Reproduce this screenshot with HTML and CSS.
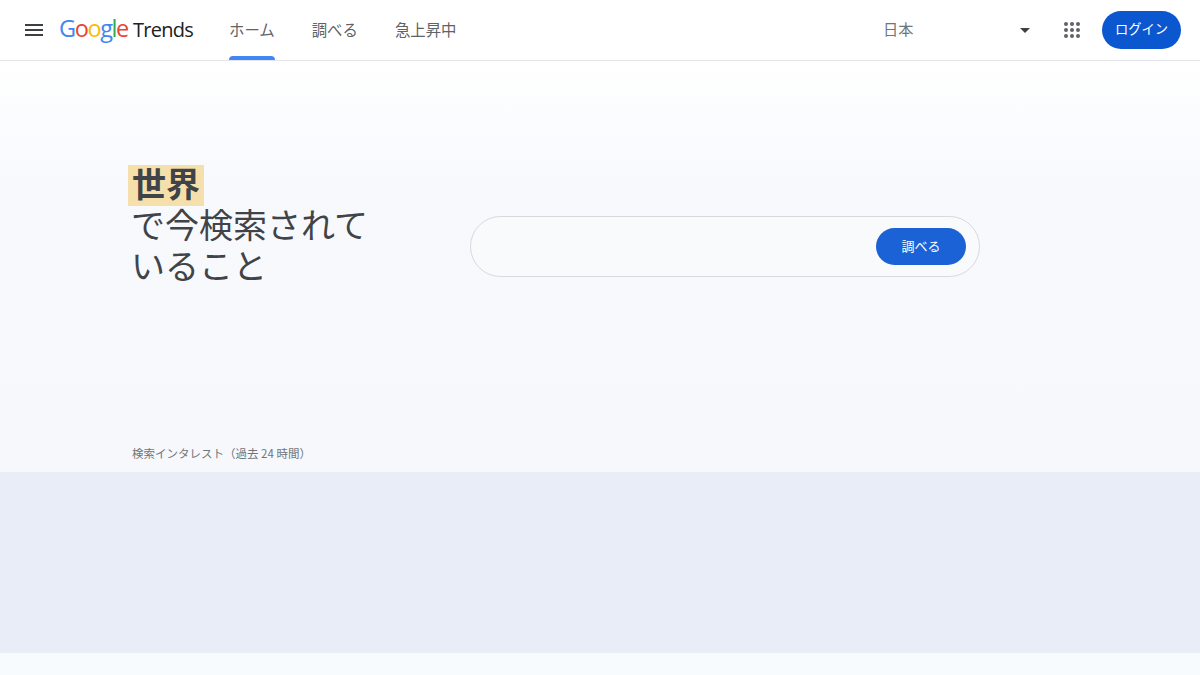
FILE: index.html
```html
<!DOCTYPE html>
<html lang="ja">
<head>
<meta charset="utf-8">
<title>Google Trends</title>
<link rel="stylesheet" href="styles.css">
</head>
<body>
<header class="topbar">
  <button class="icon-btn menu" aria-label="メニュー">
    <svg width="18" height="12" viewBox="0 0 18 12"><path d="M0 0h18v2H0zM0 5h18v2H0zM0 10h18v2H0z" fill="#3c4043"/></svg>
  </button>
  <div class="logo"><span class="g-blue">G</span><span class="g-red">o</span><span class="g-yellow">o</span><span class="g-blue">g</span><span class="g-green">l</span><span class="g-red">e</span><span class="logo-product">Trends</span></div>
  <nav class="tabs">
    <a class="tab active">ホーム</a>
    <a class="tab">調べる</a>
    <a class="tab">急上昇中</a>
  </nav>
  <div class="country">
    <span class="country-name">日本</span>
    <i class="caret"></i>
  </div>
  <button class="icon-btn apps" aria-label="アプリ">
    <svg width="16" height="16" viewBox="0 0 16 16" fill="#5f6368"><circle cx="2" cy="2" r="2"/><circle cx="8" cy="2" r="2"/><circle cx="14" cy="2" r="2"/><circle cx="2" cy="8" r="2"/><circle cx="8" cy="8" r="2"/><circle cx="14" cy="8" r="2"/><circle cx="2" cy="14" r="2"/><circle cx="8" cy="14" r="2"/><circle cx="14" cy="14" r="2"/></svg>
  </button>
  <button class="login">ログイン</button>
</header>
<main>
  <section class="hero">
    <div class="hero-row">
      <h1 class="headline"><b class="mark">世界</b><span class="line">で今検索されて</span><span class="line">いること</span></h1>
      <div class="search">
        <button class="search-btn">調べる</button>
      </div>
    </div>
    <p class="caption">検索インタレスト（過去 24 時間）</p>
  </section>
  <section class="band"></section>
  <section class="foot"></section>
</main>
</body>
</html>
```
FILE: styles.css
```css
* { box-sizing: border-box; }
html, body { margin: 0; height: 100%; }
body {
  width: 1200px;
  height: 675px;
  overflow: hidden;
  background: #f8fbfe;
  font-family: "Noto Sans CJK JP", "Noto Sans", sans-serif;
  color: #3c4043;
}
button { font-family: inherit; border: 0; padding: 0; background: none; }

.topbar {
  display: flex;
  align-items: center;
  height: 61px;
  background: #fff;
  border-bottom: 1px solid #e3e5e8;
}
.icon-btn { display: flex; align-items: center; justify-content: center; }
.menu { margin-left: 25px; width: 18px; height: 12px; }
.logo {
  margin-left: 16px;
  width: 153px;
  padding-bottom: 2px;
  font-family: "Open Sans", sans-serif;
  font-size: 23.5px;
  font-weight: 500;
  letter-spacing: -1.4px;
  line-height: 30px;
  white-space: nowrap;
}
.g-blue { color: #4285f4; }
.g-red { color: #ea4335; }
.g-yellow { color: #fbbc05; }
.g-green { color: #34a853; }
.logo-product {
  margin-left: 5px;
  color: #202124;
  font-size: 20px;
  letter-spacing: -0.7px;
}
.tabs {
  display: flex;
  gap: 37px;
  margin-left: 17px;
  height: 60px;
}
.tab {
  position: relative;
  display: flex;
  align-items: center;
  height: 60px;
  padding-bottom: 3px;
  font-size: 15.4px;
  color: #5f6368;
}
.tab.active::after {
  content: "";
  position: absolute;
  left: 0;
  right: 0;
  bottom: 0;
  height: 4px;
  background: #4285f4;
  border-radius: 4px 4px 0 0;
}
.country {
  display: flex;
  align-items: center;
  justify-content: space-between;
  width: 147px;
  margin-left: auto;
  font-size: 15.2px;
  color: #70757a;
}
.country-name { padding-bottom: 4px; }
.caret {
  width: 0;
  height: 0;
  border-left: 5px solid transparent;
  border-right: 5px solid transparent;
  border-top: 5px solid #3c4043;
}
.apps { margin-left: 34px; width: 16px; height: 16px; }
.login {
  margin-left: 22px;
  margin-right: 19px;
  width: 79px;
  height: 38px;
  padding-bottom: 3px;
  border-radius: 19px;
  background: #0b57d0;
  color: #fff;
  font-size: 13.3px;
}

.hero {
  height: 411px;
  padding: 104px 0 0 131px;
  background: linear-gradient(180deg, #ffffff 0%, #f7f9fd 30%, #f6f8fc 100%);
}
.hero-row { display: flex; align-items: flex-start; height: 279px; }
.headline {
  width: 339px;
  margin: 0;
  font-size: 34px;
  font-weight: 400;
  line-height: 40.5px;
  color: #404347;
}
.mark {
  display: block;
  width: fit-content;
  margin-left: -3px;
  padding: 0 4px 4px;
  line-height: 35px;
  font-weight: 700;
  background: #f5e0ab;
  box-shadow: 0 2px 0 #f5e0ab;
}
.line { display: block; }
.search {
  display: flex;
  align-items: center;
  justify-content: flex-end;
  width: 510px;
  height: 61px;
  margin-top: 51px;
  padding-right: 13px;
  border: 1px solid #d6d9dd;
  border-radius: 31px;
  background: #f9fafb;
}
.search-btn {
  width: 90px;
  height: 37px;
  padding-bottom: 3px;
  border-radius: 19px;
  background: #1a62d6;
  color: #fff;
  font-size: 13px;
}
.caption {
  margin: 0 0 0 1px;
  font-size: 11.5px;
  line-height: 18px;
  color: #70757a;
}
.band { height: 181px; background: #e8edf7; }
.foot { height: 22px; background: #f8fbfe; }
```
